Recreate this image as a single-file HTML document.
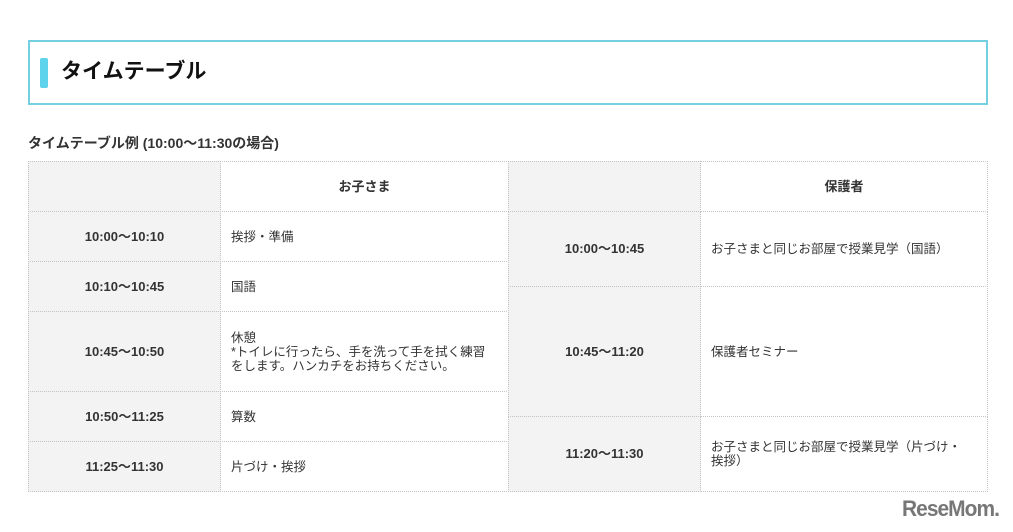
<!DOCTYPE html>
<html><head><meta charset="utf-8"><style>
*{margin:0;padding:0;box-sizing:border-box}
body{width:1013px;height:532px;background:#fff;font-family:"Liberation Sans","Noto Sans CJK JP",sans-serif;color:#333;position:relative;overflow:hidden}
.box{position:absolute;left:28px;top:40px;width:960px;height:65px;border:2px solid #74d0e0}
.bar{position:absolute;left:40px;top:58px;width:8px;height:30px;background:#5fd3ec;border-radius:2px}
.ttl{position:absolute;left:61px;top:58px;font-size:21px;font-weight:bold;color:#111;line-height:28px}
.sub{position:absolute;left:28px;top:133px;font-size:14px;font-weight:bold;color:#333;line-height:20px}
.c{position:absolute;border:1px dotted #c4c4c4;display:flex;align-items:center;font-size:12.5px;line-height:14px}
.t{background:#f3f3f3;justify-content:center;font-weight:bold;font-size:13px}
.h{justify-content:center;font-weight:bold;font-size:13px}
.d{padding-left:10px;padding-right:10px}
.logo{position:absolute;left:902px;top:496px;font-size:22px;font-weight:bold;color:#777;letter-spacing:-1px;transform:scaleX(0.95);transform-origin:left}
</style></head><body>
<div class="box"></div><div class="bar"></div>
<div class="ttl">タイムテーブル</div>
<div class="sub">タイムテーブル例 (10:00〜11:30の場合)</div>

<div class="c t" style="left:28px;top:161px;width:193px;height:51px"></div>
<div class="c h" style="left:220px;top:161px;width:289px;height:51px">お子さま</div>
<div class="c t" style="left:28px;top:211px;width:193px;height:51px">10:00〜10:10</div>
<div class="c d" style="left:220px;top:211px;width:289px;height:51px">挨拶・準備</div>
<div class="c t" style="left:28px;top:261px;width:193px;height:51px">10:10〜10:45</div>
<div class="c d" style="left:220px;top:261px;width:289px;height:51px">国語</div>
<div class="c t" style="left:28px;top:311px;width:193px;height:81px">10:45〜10:50</div>
<div class="c d" style="left:220px;top:311px;width:289px;height:81px;padding-right:16px">休憩<br>*トイレに行ったら、手を洗って手を拭く練習をします。ハンカチをお持ちください。</div>
<div class="c t" style="left:28px;top:391px;width:193px;height:51px">10:50〜11:25</div>
<div class="c d" style="left:220px;top:391px;width:289px;height:51px">算数</div>
<div class="c t" style="left:28px;top:441px;width:193px;height:51px">11:25〜11:30</div>
<div class="c d" style="left:220px;top:441px;width:289px;height:51px">片づけ・挨拶</div>

<div class="c t" style="left:508px;top:161px;width:193px;height:51px"></div>
<div class="c h" style="left:700px;top:161px;width:288px;height:51px">保護者</div>
<div class="c t" style="left:508px;top:211px;width:193px;height:76px">10:00〜10:45</div>
<div class="c d" style="left:700px;top:211px;width:288px;height:76px">お子さまと同じお部屋で授業見学（国語）</div>
<div class="c t" style="left:508px;top:286px;width:193px;height:131px">10:45〜11:20</div>
<div class="c d" style="left:700px;top:286px;width:288px;height:131px">保護者セミナー</div>
<div class="c t" style="left:508px;top:416px;width:193px;height:76px">11:20〜11:30</div>
<div class="c d" style="left:700px;top:416px;width:288px;height:76px;padding-right:24px">お子さまと同じお部屋で授業見学（片づけ・挨拶）</div>

<div class="logo">ReseMom.</div>
</body></html>
